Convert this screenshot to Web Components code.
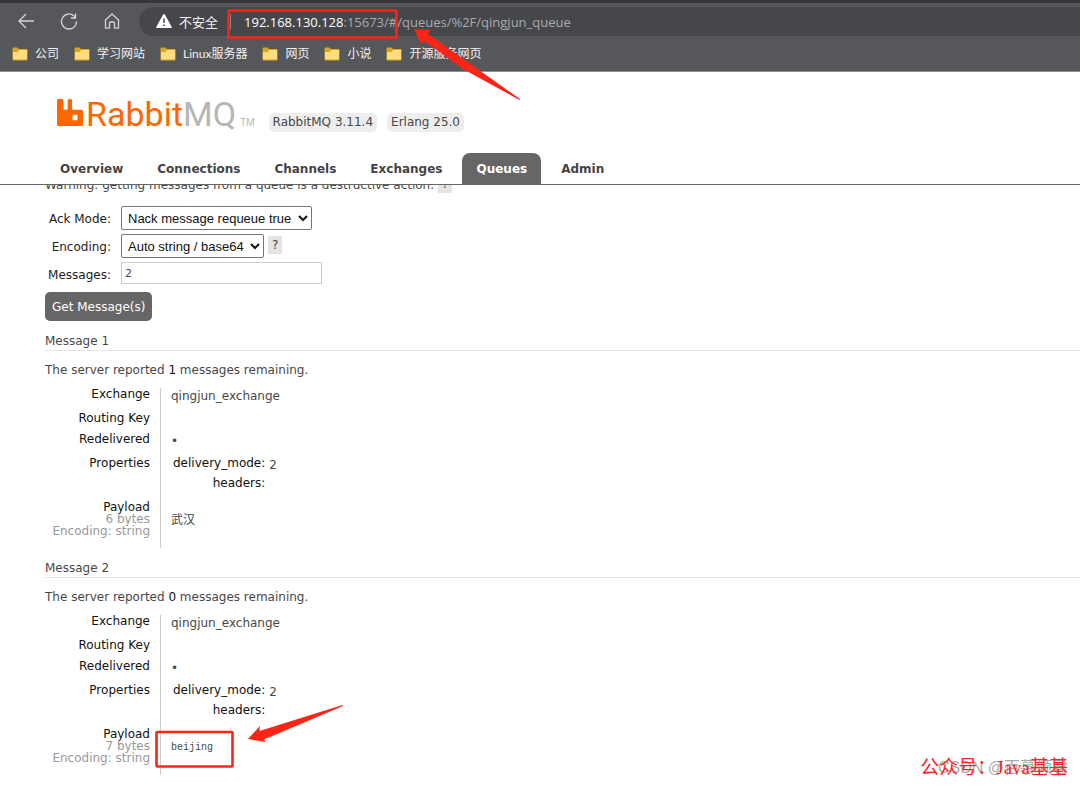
<!DOCTYPE html>
<html lang="zh-CN">
<head>
<meta charset="utf-8">
<title>RabbitMQ Management</title>
<style>
  body {
    margin: 0;
    background: #fff;
    color: #484848;
    font: 12px/16px "DejaVu Sans", "Noto Sans CJK SC", sans-serif;
  }
</style>
</head>
<body>
<queue-page></queue-page>

<script>
function define(name, html, setup) {
  const template = document.createElement("template");
  template.innerHTML = html;
  window.customElements.define(name, class extends HTMLElement {
    constructor() {
      super();
      this.attachShadow({ mode: "open" });
      this.shadowRoot.appendChild(template.content.cloneNode(true));
    }
    connectedCallback() {
      if (setup) setup(this, this.shadowRoot);
    }
  });
}

define("bookmark-link", `
  <style>
    :host { display: block; }
    a {
      display: flex;
      align-items: center;
      gap: 7px;
      color: #f2f2f2;
      text-decoration: none;
      white-space: nowrap;
    }
  </style>
  <a href="#">
    <svg width="16" height="14" viewBox="0 0 16 14">
      <path d="M0.5 1.5q0-1 1-1h4l1.5 1.5h7.5q1 0 1 1v9.500q0 1-1 1h-13q-1 0-1-1z" fill="#d9a520"/>
      <path d="M1 5h4.500l1.500-2h8v9.500h-14z" fill="#ffdc7c"/>
    </svg>
    <slot></slot>
  </a>
`);

define("browser-bar", `
  <style>
    :host {
      display: block;
      background: #56575b;
      border-top: 3px solid #35363a;
      border-bottom: 1px solid #8d8d90;
      color: #f2f2f2;
      font: 12px/16px Lato, "Noto Sans CJK SC", sans-serif;
    }
    .toolbar { display: flex; align-items: center; padding: 4px 0 0 17px; }
    .nav { display: flex; gap: 25px; }
    button { display: block; padding: 0; border: 0; background: none; color: #d5d5d7; }
    svg { display: block; }
    .address {
      flex: 1;
      display: flex;
      align-items: center;
      height: 29px;
      margin-left: 18px;
      padding-left: 17px;
      background: #46474b;
      border-radius: 15px 0 0 15px;
      font: 13px/16px "Open Sans", "Noto Sans CJK SC", sans-serif;
      white-space: nowrap;
    }
    .unsafe { margin: 0 12px 0 7px; }
    .bar { width: 1px; height: 16px; background: #85868a; margin-right: 13px; }
    .url { color: #a9aaad; }
    .url b { color: #fff; font-weight: normal; }
    nav { display: flex; gap: 15px; padding: 10px 12px 9px; }
  </style>
  <div class="toolbar">
    <div class="nav">
      <button aria-label="Back"><svg width="18" height="18" viewBox="0 0 18 18" fill="none" stroke="currentColor" stroke-width="1.300"><path d="M17 8H2M9 1L2 8l7 7"/></svg></button>
      <button aria-label="Refresh"><svg width="18" height="18" viewBox="0 0 18 18" fill="none" stroke="currentColor" stroke-width="1.300"><path d="M16.500 8.500a7.500 7.500 0 1 1-2.500-5.600L15.500 4.500M15.500 .5v4.500H11"/></svg></button>
      <button aria-label="Home"><svg width="18" height="18" viewBox="0 0 18 18" fill="none" stroke="currentColor" stroke-width="1.300" stroke-linejoin="round"><path d="M2.500 7L9 1l6.500 6v8.200H11.500V10q0-1-1-1h-3q-1 0-1 1v5.200h-4z"/></svg></button>
    </div>
    <div class="address">
      <svg width="16" height="15" viewBox="0 0 16 15"><path d="M8 0q.6 0 1 .7l6.600 12q.6 1.300-.7 1.300H1.100q-1.300 0-.7-1.300l6.600-12q.4-.7 1-.7z" fill="#fff"/><path d="M8 4.500v4.500M8 10.500v1.600" stroke="#46474b" stroke-width="1.500"/></svg>
      <span class="unsafe">不安全</span>
      <span class="bar"></span>
      <span class="url"><b>192.168.130.128</b>:15673/#/queues/%2F/qingjun_queue</span>
    </div>
  </div>
  <nav>
    <bookmark-link>公司</bookmark-link>
    <bookmark-link>学习网站</bookmark-link>
    <bookmark-link>Linux服务器</bookmark-link>
    <bookmark-link>网页</bookmark-link>
    <bookmark-link>小说</bookmark-link>
    <bookmark-link>开源服务网页</bookmark-link>
  </nav>
`);

define("rabbit-logo", `
  <style>
    :host { display: flex; align-items: baseline; color: #f60; }
    svg { margin-right: 3px; }
    .name { font: 34px/32px Roboto, sans-serif; }
    .mq { color: #b6b6b6; }
    .tm { margin-left: 4px; color: #b6b6b6; font: 10px/12px "Liberation Sans", sans-serif; }
  </style>
  <svg width="26" height="27" viewBox="0 0 26 27"><path fill="#f60" fill-rule="evenodd" d="M1.500 0h3.500q1.500 0 1.500 1.500v8q0 1.300 1.300 1.300h1.600q1.300 0 1.300-1.300v-8Q10.700 0 12.200 0h1.300Q15 0 15 1.500v8q0 1.300 1.300 1.300h8.200q1.500 0 1.500 1.500v13.200q0 1.500-1.500 1.500h-23Q0 27 0 25.500v-24Q0 0 1.500 0zM15.500 16.500v4q0 .8.8.8h3.400q.8 0 .8-.8v-4q0-.8-.8-.8h-3.400q-.8 0-.8.8z"/></svg>
  <span class="name">Rabbit<span class="mq">MQ</span></span>
  <span class="tm">TM</span>
`);

define("management-header", `
  <style>
    :host { display: block; border-bottom: 1px solid #666; }
    .brand { display: flex; align-items: flex-end; padding: 26px 0 0 57px; }
    .version {
      padding: 1px 4px 2px;
      border-radius: 5px;
      background: #eee;
    }
    rabbit-logo { margin: 0 14px 2px 0; }
    .version + .version { margin-left: 10px; }
    nav { display: flex; gap: 6px; padding: 21px 0 0 46px; }
    a {
      padding: 8px 14px 7px;
      border-radius: 8px 8px 0 0;
      color: #444;
      font-weight: bold;
      text-decoration: none;
    }
    a.selected { background: #666; color: #fff; }
  </style>
  <div class="brand">
    <rabbit-logo></rabbit-logo>
    <span class="version">RabbitMQ 3.11.4</span>
    <span class="version">Erlang 25.0</span>
  </div>
  <nav>
    <a href="#">Overview</a>
    <a href="#">Connections</a>
    <a href="#">Channels</a>
    <a href="#">Exchanges</a>
    <a href="#" class="selected">Queues</a>
    <a href="#">Admin</a>
  </nav>
`);

define("help-mark", `
  <style>
    :host { display: inline-block; padding: 1px 4px; background: #e4e4e4; color: #444; }
  </style>
  <slot>?</slot>
`);

define("get-messages", `
  <style>
    :host { display: block; }
    /* scrolled up behind the header, only the lower half shows */
    .warning { display: flex; align-items: flex-end; height: 8px; overflow: hidden; }
    .warning help-mark { margin-left: 4px; }
    .fields { display: grid; grid-template-columns: 66px 1fr; gap: 2px 10px; padding: 13px 0 4px; }
    label { text-align: right; line-height: 26px; color: #222; white-space: nowrap; }
    .control { display: flex; align-items: flex-start; gap: 4px; }
    select {
      height: 24px;
      padding: 0 2px;
      border: 1px solid #767676;
      border-radius: 2px;
      background: #fff;
      color: #111;
      font: 13px "Liberation Sans", sans-serif;
    }
    #ack { width: 191px; }
    #encoding { width: 143px; }
    .control help-mark { margin-top: 2px; }
    input {
      box-sizing: border-box;
      width: 201px;
      height: 22px;
      padding: 0 3px;
      border: 1px solid #ccc;
      color: #444;
      font: 11px "DejaVu Sans", sans-serif;
    }
    button {
      display: block;
      padding: 7px 7px 6px;
      border: 0;
      border-radius: 5px;
      background: #666;
      color: #fff;
      font: inherit;
    }
  </style>
  <div class="warning">Warning: getting messages from a queue is a destructive action.<help-mark></help-mark></div>
  <div class="fields">
    <label for="ack">Ack Mode:</label>
    <div class="control"><select id="ack"><option>Nack message requeue true</option></select></div>
    <label for="encoding">Encoding:</label>
    <div class="control"><select id="encoding"><option>Auto string / base64</option></select><help-mark></help-mark></div>
    <label for="count">Messages:</label>
    <div class="control"><input id="count" type="text" value="2"></div>
  </div>
  <button>Get Message(s)</button>
`);

define("queue-message", `
  <style>
    :host { display: block; margin-top: 12px; }
    h2 { margin: 0 0 11px; padding-bottom: 1px; border-bottom: 1px solid #e4e4e4; font-size: 12px; font-weight: normal; }
    p { margin: 0 0 10px 0; }
    p b { font-weight: normal; color: #111; }
    table { border-collapse: collapse; }
    th, td { padding: 0; vertical-align: top; }
    th { font-weight: normal; line-height: 12px; color: #111; text-align: right; }
    .facts > tbody > tr { height: 24px; }
    .facts > tbody > tr.short { height: 21px; }
    .facts > tbody > tr.tall { height: 44px; }
    .facts > tbody > tr.payload { height: 47px; }
    .facts > tbody > tr > th { width: 105px; padding-right: 10px; border-right: 1px solid #ccc; }
    .facts > tbody > tr > td { padding-left: 10px; }
    .props th { height: 20px; padding: 0 4px 0 2px; }
    .sub { display: block; color: #999; }
    pre { margin: 12px 0 0; font: 12px/16px "Liberation Mono", "Noto Sans CJK SC", monospace; }
    pre.latin { font-size: 10px; }
  </style>
  <h2><slot></slot></h2>
  <p>The server reported <b id="remaining"></b> messages remaining.</p>
  <table class="facts">
    <tr><th>Exchange</th><td>qingjun_exchange</td></tr>
    <tr class="short"><th>Routing Key</th><td></td></tr>
    <tr><th>Redelivered</th><td>•</td></tr>
    <tr class="tall"><th>Properties</th><td>
      <table class="props">
        <tr><th>delivery_mode:</th><td>2</td></tr>
        <tr><th>headers:</th><td></td></tr>
      </table>
    </td></tr>
    <tr class="payload">
      <th>Payload<span class="sub" id="bytes"></span><span class="sub">Encoding: string</span></th>
      <td><pre id="payload"></pre></td>
    </tr>
  </table>
`, (el, root) => {
  const payload = el.getAttribute("payload");
  root.getElementById("remaining").textContent = el.getAttribute("remaining");
  root.getElementById("bytes").textContent = el.getAttribute("bytes") + " bytes";
  root.getElementById("payload").textContent = payload;
  root.getElementById("payload").classList.toggle("latin", /^[ -~]*$/.test(payload));
});

// red boxes and arrows drawn over the page
define("red-marks", `
  <style>
    :host { position: absolute; top: 0; left: 0; pointer-events: none; }
    svg { display: block; }
  </style>
  <svg width="530" height="780" viewBox="0 0 530 780" fill="#fc2415">
    <g fill="none" stroke="#fc2415" stroke-width="2.600">
      <rect x="228.500" y="10.500" width="168" height="27" rx="1"/>
      <rect x="156.500" y="732" width="76" height="34.500" rx="1"/>
    </g>
    <path d="M414 29l17 1-3.500 3.500L472 65l48 34-.5 1L463 69 424.500 41l-3.500 3z"/>
    <path d="M248 739l12-13-.5 5 83-26 .5 1-73 31-5.500 2 .5 3z"/>
  </svg>
`);

define("page-watermark", `
  <style>
    :host {
      position: absolute;
      right: 12px;
      bottom: 8px;
      display: grid;
      align-items: center;
      justify-items: end;
      white-space: nowrap;
    }
    span { grid-area: 1 / 1; }
    .site { color: #aaa; font: 16px/20px "Liberation Sans", "Noto Sans CJK SC", sans-serif; }
    .account { color: #f8262b; font: 19px/20px "Liberation Serif", "Noto Sans CJK SC", serif; }
  </style>
  <span class="site">CSDN @百慕倾君</span>
  <span class="account">公众号：Java基基</span>
`);

define("queue-page", `
  <style>
    :host { display: block; position: relative; min-height: 100vh; }
    main { padding-left: 45px; }
  </style>
  <browser-bar></browser-bar>
  <management-header></management-header>
  <main>
    <get-messages></get-messages>
    <queue-message remaining="1" bytes="6" payload="武汉">Message 1</queue-message>
    <queue-message remaining="0" bytes="7" payload="beijing">Message 2</queue-message>
  </main>
  <red-marks></red-marks>
  <page-watermark></page-watermark>
`);
</script>
</body>
</html>
